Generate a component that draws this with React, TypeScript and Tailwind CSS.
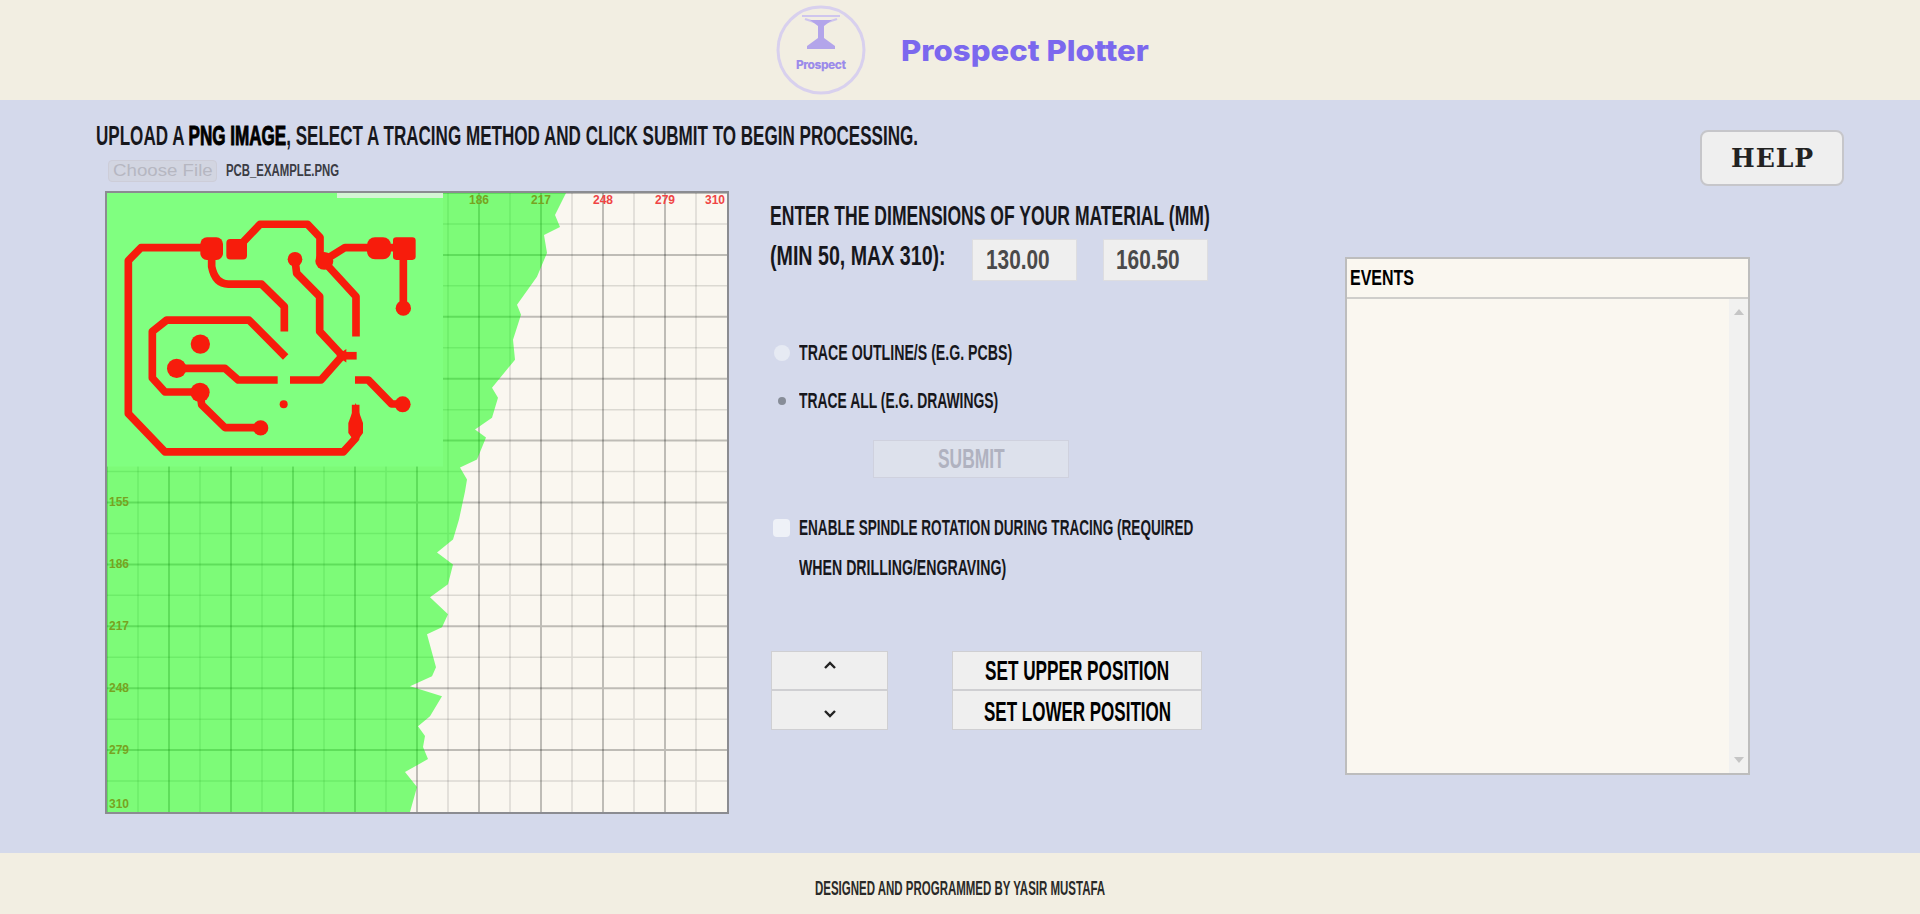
import { useLayoutEffect, useRef, useState, type ReactNode } from "react";
import clsx from "clsx";

/* Condensed text line: the glyphs are squeezed horizontally to fill the given width. */
function Fit({ width, className, children }: { width: number; className?: string; children: ReactNode }) {
  const ref = useRef<HTMLSpanElement>(null);
  const [scale, setScale] = useState(1);
  useLayoutEffect(() => {
    if (ref.current) setScale(width / ref.current.offsetWidth);
  }, [width]);
  return (
    <span className={clsx("block shrink-0 whitespace-nowrap text-left", className)} style={{ width }}>
      <span ref={ref} className="inline-block origin-left" style={{ transform: `scaleX(${scale})` }}>
        {children}
      </span>
    </span>
  );
}

function Logo() {
  return (
    <svg className="h-[92px] w-[92px]" viewBox="0 0 92 92" fill="none">
      <circle cx="46" cy="46" r="43" stroke="#d8d0ee" strokeWidth="3" />
      <path d="M27 12h38M30 15q16 7 32 0" stroke="#cfc6ee" strokeWidth="2" />
      <path d="M35 16h22l-8 6v12l11 8v3H32v-3l11-8V22z" fill="#b3a5ea" />
      <text x="46" y="65" textAnchor="middle" textLength="50" fontSize="12" fontWeight="800" fontFamily="Inter, sans-serif" fill="#9b8bea">
        Prospect
      </text>
    </svg>
  );
}

const steps = [1, 2, 3, 4, 5, 6, 7, 8, 9, 10];
const minor = Array.from({ length: 20 }, (_, i) => i * 31);

function Plot() {
  return (
    <svg className="block h-[619px] w-[620px]" viewBox="0 0 620 620" preserveAspectRatio="none" fill="none">
      <rect width="620" height="620" fill="#faf7f0" />
      {minor.map((p) => (
        <path key={p} d={`M${p} 0V620M0 ${p}H620`} stroke="#000" strokeOpacity={p % 62 === 0 ? 0.24 : 0.12} strokeWidth={p % 62 === 0 ? 2 : 1.5} />
      ))}
      <g fill="#f04444" fontSize="12" fontWeight="700" fontFamily="Liberation Sans, sans-serif">
        {steps.slice(5).map((n) => (
          <text key={n} x={n === 10 ? 608 : n * 62} y="11" textAnchor="middle">{n * 31}</text>
        ))}
        {steps.slice(4).map((n) => (
          <text key={n} x="2" y={n === 10 ? 616 : n * 62 + 4}>{n * 31}</text>
        ))}
      </g>
      <path
        d="M0 0H459L448 22 453 34 437 42 440 60 430 84 410 112 414 122 406 147 408 167 385 195 391 205 385 225 368 237 379 245 370 267 353 275 360 287 358 299 352 327 346 347 330 360 346 372 341 392 323 405 341 422 335 435 320 442 329 475 325 484 303 494 335 504 323 524 311 534 318 544 316 555 321 567 298 580 310 595 303 620H0Z"
        fill="#00ff00"
        fillOpacity="0.5"
      />
      <rect width="336" height="274" fill="#80ff80" />
      <rect x="230" y="0" width="106" height="5" fill="#d5f5d5" />
      <g transform="translate(-12 -13) scale(.33333)" stroke="#f71c0c" strokeWidth="23" strokeLinejoin="round">
        <path d="M350 203H138L100 242V702L210 817H745L782 776V675" />
        <path d="M425 207L495 133H638L675 172V232L783 350V470" />
        <path d="M350 207V260Q360 312 400 313H500L568 380V455" />
        <path d="M600 240L605 280 674 350V455L742 528 678 601H585M548 601H430L390 566H245" />
        <path d="M690 240L750 203H925V385" />
        <path d="M572 532L462 421H215L172 455V595L210 637H315L320 675 390 744H495" />
        <path d="M780 601H820L890 673H920" />
        <path d="M740 528H785" />
        <g fill="#f71c0c" stroke="none">
          <rect x="316" y="172" width="68" height="68" rx="20" />
          <rect x="394" y="177" width="62" height="62" rx="12" />
          <rect x="816" y="172" width="72" height="66" rx="24" />
          <rect x="894" y="172" width="68" height="68" rx="10" />
          <circle cx="600" cy="238" r="22" />
          <circle cx="688" cy="243" r="27" />
          <circle cx="925" cy="385" r="23" />
          <circle cx="316" cy="493" r="29" />
          <circle cx="245" cy="566" r="29" />
          <circle cx="315" cy="638" r="29" />
          <circle cx="497" cy="745" r="23" />
          <circle cx="923" cy="674" r="24" />
          <circle cx="566" cy="674" r="12" />
          <path d="M724 528l30-20v40zM782 670l22 60v30l-22 30-22-30v-30z" />
        </g>
      </g>
    </svg>
  );
}

const button = "flex items-center justify-center border border-[#cfcfd2] bg-[#efefef] text-black";

export default function App() {
  return (
    <div className="flex h-[914px] w-[1920px] flex-col overflow-hidden bg-[#d4d9eb] font-['Liberation_Sans_Narrow','Liberation_Sans',sans-serif] font-bold text-[#17171c]">
      <header className="flex h-[100px] shrink-0 items-center bg-[#f2eee2] pl-[775px]">
        <Logo />
        <Fit width={248} className="ml-[34px] pt-0.5 font-['Inter',sans-serif] text-[29px] font-extrabold leading-[40px] text-[#7b68ee]">
          Prospect Plotter
        </Fit>
      </header>

      <main className="flex h-[753px] shrink-0 items-start">
        <section className="w-[770px] shrink-0 pl-[96px] pt-[21px]">
          <Fit width={822} className="text-[27px] leading-[30px] font-bold">
            UPLOAD A <span className="text-black [-webkit-text-stroke:1px_black]">PNG IMAGE</span>, SELECT A TRACING METHOD AND CLICK SUBMIT TO BEGIN PROCESSING.
          </Fit>
          <div className="ml-3 mt-[9px] flex h-[22px] items-center">
            <div className="flex h-[22px] w-[109px] items-center rounded-sm border border-[#cdcdd8] bg-[#d2d5e1] pl-1 font-['Liberation_Sans',sans-serif] font-normal text-[#b6b7c1]">
              <Fit width={100} className="text-[17px] leading-5">Choose File</Fit>
            </div>
            <Fit width={113} className="ml-[9px] text-[16px] leading-5 text-[#3b3c44]">PCB_EXAMPLE.PNG</Fit>
          </div>
          <div className="ml-[9px] mt-[9px] w-[624px] border-2 border-[#8b8c91]">
            <Plot />
          </div>
        </section>

        <section className="flex w-[575px] shrink-0 flex-col pt-[101px]">
          <Fit width={440} className="text-[28px] leading-[30px]">ENTER THE DIMENSIONS OF YOUR MATERIAL (MM)</Fit>
          <div className="mt-[8px] flex h-[42px]">
            <Fit width={176} className="mt-[2px] text-[28px] leading-[30px]">(MIN 50, MAX 310):</Fit>
            <div className="ml-[26px] flex w-[105px] items-center border border-[#dddde0] bg-[#efefef] pl-[13px] text-[#4a4a4a]">
              <Fit width={64} className="text-[27px] leading-8">130.00</Fit>
            </div>
            <div className="ml-[26px] flex w-[105px] items-center border border-[#dddde0] bg-[#efefef] pl-[12px] text-[#4a4a4a]">
              <Fit width={64} className="text-[27px] leading-8">160.50</Fit>
            </div>
          </div>

          <div className="mt-[57px] flex h-[30px] items-center">
            <span className="ml-1 mr-[9px] h-4 w-4 rounded-full bg-[#e6eaf3]" />
            <Fit width={213} className="text-[22px] leading-[30px]">TRACE OUTLINE/S (E.G. PCBS)</Fit>
          </div>
          <div className="mt-[18px] flex h-[30px] items-center">
            <span className="ml-2 mr-[13px] h-2 w-2 rounded-full bg-[#878d98]" />
            <Fit width={199} className="text-[22px] leading-[30px]">TRACE ALL (E.G. DRAWINGS)</Fit>
          </div>
          <div className="ml-[103px] mt-[24px] flex h-[38px] w-[196px] items-center justify-center border border-[#cfd1de] bg-[#dde1ec] text-[#b0b2c0]">
            <Fit width={67} className="text-[27px] leading-8">SUBMIT</Fit>
          </div>

          <div className="mt-[30px] flex items-start">
            <span className="ml-[3px] mr-[9px] mt-[11px] h-[18px] w-[17px] rounded-sm bg-[#eef1f7]" />
            <div>
              <Fit width={394} className="text-[22px] leading-[40px]">ENABLE SPINDLE ROTATION DURING TRACING (REQUIRED</Fit>
              <Fit width={207} className="text-[22px] leading-[40px]">WHEN DRILLING/ENGRAVING)</Fit>
            </div>
          </div>

          <div className="ml-px mt-[63px] flex gap-[64px]">
            <div className="w-[117px]">
              <div className={clsx(button, "h-[39px] pb-3")}>
                <svg className="h-2 w-3" viewBox="0 0 12 8" fill="none"><path d="M1 7L6 2l5 5" stroke="#222" strokeWidth="2.4" /></svg>
              </div>
              <div className={clsx(button, "h-[40px] pt-2")}>
                <svg className="h-2 w-3" viewBox="0 0 12 8" fill="none"><path d="M1 1l5 5 5-5" stroke="#222" strokeWidth="2.4" /></svg>
              </div>
            </div>
            <div className="w-[250px]">
              <div className={clsx(button, "h-[39px] pt-px")}>
                <Fit width={184} className="text-[28px] leading-8">SET UPPER POSITION</Fit>
              </div>
              <div className={clsx(button, "h-[40px] pt-1")}>
                <Fit width={187} className="text-[28px] leading-8">SET LOWER POSITION</Fit>
              </div>
            </div>
          </div>
        </section>

        <section className="flex w-[575px] shrink-0 flex-col pt-[30px]">
          <div className="ml-[355px] flex h-[56px] w-[144px] items-center justify-center rounded-lg border-2 border-[#c6c6ca] bg-[#efefef] text-[#222]">
            <Fit width={83} className="font-['DejaVu_Serif',serif] text-[26px] leading-9 tracking-[1px]">HELP</Fit>
          </div>
          <div className="mt-[71px] flex h-[518px] w-[405px] flex-col border-2 border-[#bdbdbd] bg-[#faf7f0]">
            <div className="h-[40px] border-b-2 border-[#cfcecb] pl-[3px] pt-[4px]">
              <Fit width={64} className="text-[22px] leading-[30px] text-black">EVENTS</Fit>
            </div>
            <div className="flex grow justify-end">
              <div className="flex w-[19px] flex-col items-center justify-between bg-[#f1f1f0] py-2.5">
                <svg className="h-1.5 w-2.5" viewBox="0 0 10 6"><path d="M0 6l5-6 5 6z" fill="#c5c5c5" /></svg>
                <svg className="h-1.5 w-2.5" viewBox="0 0 10 6"><path d="M0 0l5 6 5-6z" fill="#c5c5c5" /></svg>
              </div>
            </div>
          </div>
        </section>
      </main>

      <footer className="flex grow items-center justify-center bg-[#f2eee2] pt-[9px]">
        <Fit width={290} className="text-[20px] leading-[26px] text-[#2a2a28]">DESIGNED AND PROGRAMMED BY YASIR MUSTAFA</Fit>
      </footer>
    </div>
  );
}
